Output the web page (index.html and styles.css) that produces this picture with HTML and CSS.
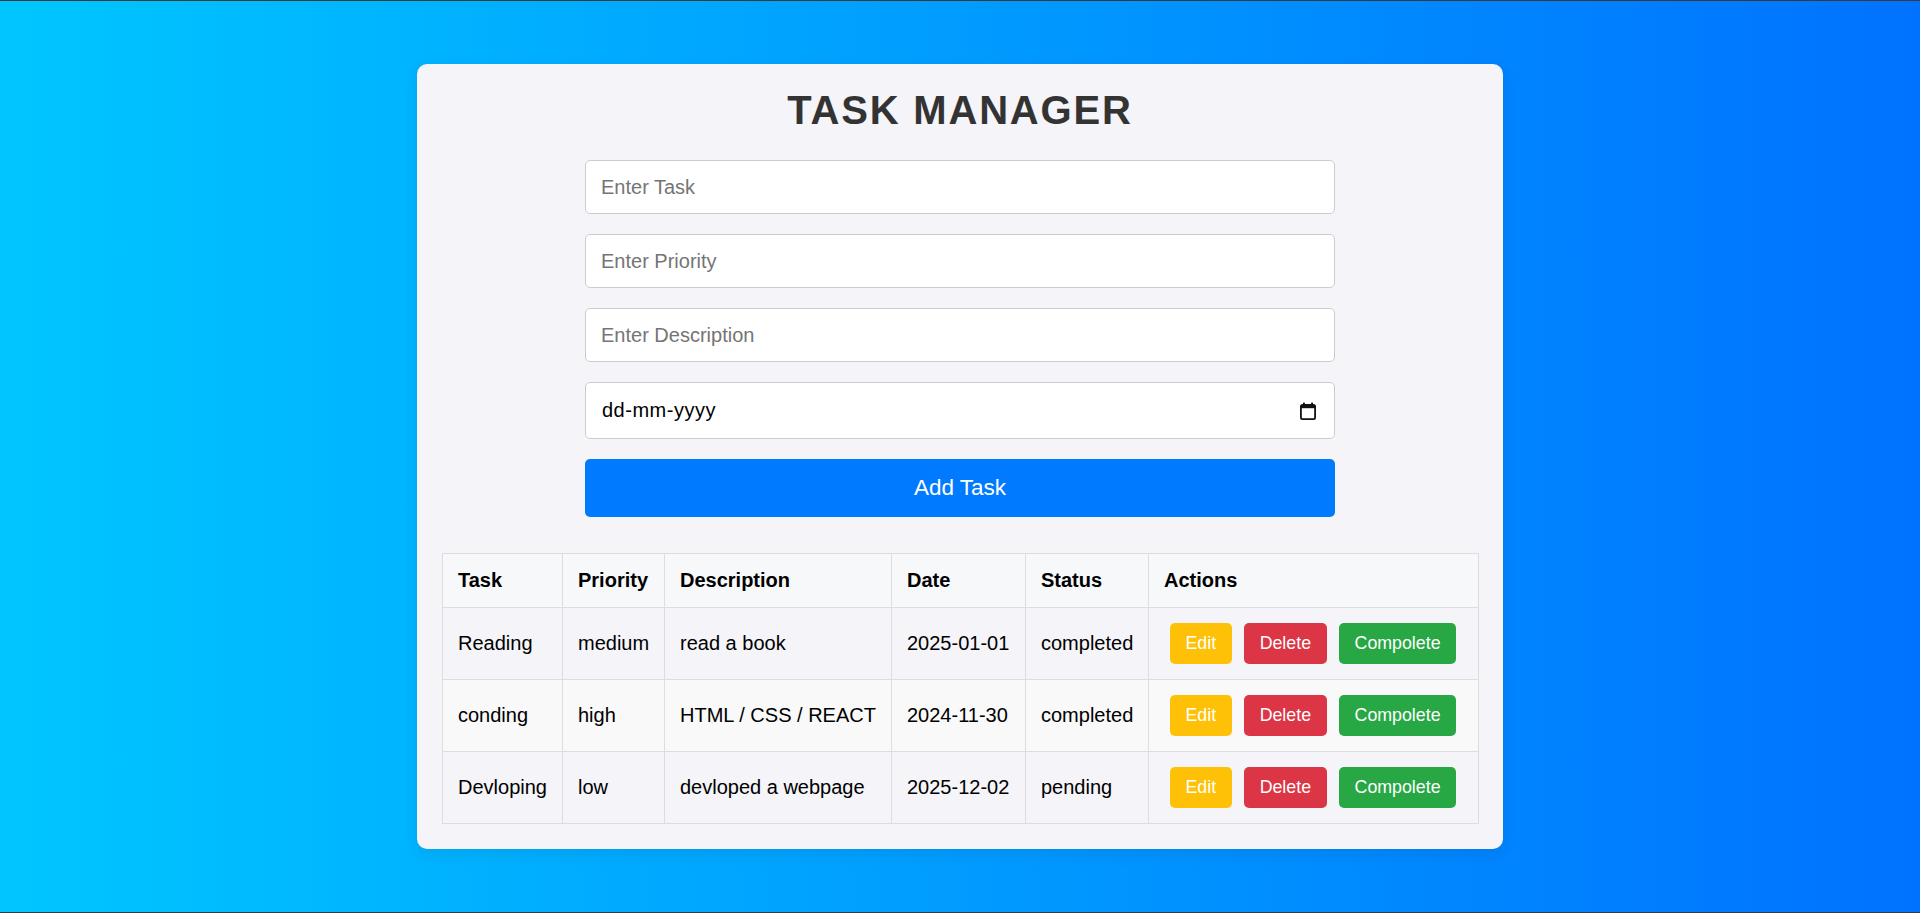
FILE: index.html
```html
<!DOCTYPE html>
<html lang="en">
<head>
<meta charset="utf-8">
<title>Task Manager</title>
<link rel="stylesheet" href="styles.css">
</head>
<body>
  <div class="app">
    <h1 class="title">TASK MANAGER</h1>
    <form class="task-form">
      <input class="field" type="text" placeholder="Enter Task">
      <input class="field" type="text" placeholder="Enter Priority">
      <input class="field" type="text" placeholder="Enter Description">
      <div class="field date-field">
        <span class="date-text">dd-mm-yyyy</span>
        <svg class="cal-icon" width="16" height="18" viewBox="0 0 16 18" aria-hidden="true">
          <rect x="0.9" y="3" width="14.2" height="14.1" rx="1.6" fill="none" stroke="#111" stroke-width="1.8"/>
          <rect x="0.9" y="3" width="14.2" height="3.2" fill="#111"/>
          <rect x="3" y="0.6" width="1.9" height="3" fill="#111"/>
          <rect x="11.1" y="0.6" width="1.9" height="3" fill="#111"/>
        </svg>
      </div>
      <button type="button" class="add-btn">Add Task</button>
    </form>

    <table class="task-table">
      <colgroup>
        <col class="c-task"><col class="c-priority"><col class="c-desc"><col class="c-date"><col class="c-status"><col class="c-actions">
      </colgroup>
      <thead>
        <tr><th>Task</th><th>Priority</th><th>Description</th><th>Date</th><th>Status</th><th>Actions</th></tr>
      </thead>
      <tbody>
        <tr>
          <td>Reading</td><td>medium</td><td>read a book</td><td>2025-01-01</td><td>completed</td>
          <td><div class="actions"><button class="btn btn-edit">Edit</button><button class="btn btn-delete">Delete</button><button class="btn btn-complete">Compolete</button></div></td>
        </tr>
        <tr>
          <td>conding</td><td>high</td><td>HTML / CSS / REACT</td><td>2024-11-30</td><td>completed</td>
          <td><div class="actions"><button class="btn btn-edit">Edit</button><button class="btn btn-delete">Delete</button><button class="btn btn-complete">Compolete</button></div></td>
        </tr>
        <tr>
          <td>Devloping</td><td>low</td><td>devloped a webpage</td><td>2025-12-02</td><td>pending</td>
          <td><div class="actions"><button class="btn btn-edit">Edit</button><button class="btn btn-delete">Delete</button><button class="btn btn-complete">Compolete</button></div></td>
        </tr>
      </tbody>
    </table>
  </div>
</body>
</html>
```
FILE: styles.css
```css
* {
  box-sizing: border-box;
}

html, body {
  margin: 0;
  padding: 0;
}

body {
  min-height: 100vh;
  display: flex;
  align-items: center;
  justify-content: center;
  font-family: "Liberation Sans", Arial, sans-serif;
  background: linear-gradient(to right, #00c6ff, #0072ff);
  box-shadow: inset 0 1px 0 #3a3a3a, inset 0 -1px 0 #3a3a3a;
}

.app {
  width: 1086px;
  background: #f4f4f9;
  border-radius: 10px;
  padding: 23px 25px 25px;
  box-shadow: 0 5px 15px rgba(0, 0, 0, 0.08);
}

.title {
  margin: 0 0 27px;
  text-align: center;
  font-size: 40px;
  line-height: 46px;
  font-weight: bold;
  letter-spacing: 1.8px;
  color: #333;
}

.task-form {
  width: 750px;
  margin: 0 auto;
  display: flex;
  flex-direction: column;
  gap: 20px;
}

.field {
  width: 100%;
  height: 54px;
  padding: 0 15px;
  border: 1px solid #ccc;
  border-radius: 5px;
  background: #fff;
  font-family: "Liberation Sans", Arial, sans-serif;
  font-size: 20px;
  color: #000;
  outline: none;
}

.field::placeholder {
  color: #757575;
}

.date-field {
  height: 57px;
  display: flex;
  align-items: center;
  justify-content: space-between;
  padding: 0 18px 0 16px;
}

.date-text {
  letter-spacing: 0.5px;
}

.cal-icon {
  display: block;
}

.add-btn {
  height: 58px;
  border: none;
  border-radius: 5px;
  background: #007bff;
  color: #fff;
  font-family: "Liberation Sans", Arial, sans-serif;
  font-size: 22.5px;
  cursor: pointer;
}

.task-table {
  width: 100%;
  margin-top: 36px;
  border-collapse: collapse;
  table-layout: fixed;
  font-size: 20px;
  color: #000;
}

.c-task { width: 120px; }
.c-priority { width: 102px; }
.c-desc { width: 227px; }
.c-date { width: 134px; }
.c-status { width: 123px; }
.c-actions { width: 330px; }

.task-table th,
.task-table td {
  border: 1px solid #ddd;
  padding: 15px;
  text-align: left;
  vertical-align: middle;
  line-height: 23px;
  white-space: nowrap;
}

.task-table th {
  background: #f7f8fa;
  font-weight: bold;
}

.task-table tbody tr:nth-child(even) td {
  background: #f9f9f9;
}

.actions {
  display: flex;
  gap: 12.5px;
  padding-left: 6px;
}

.btn {
  height: 41px;
  padding: 0 15.5px;
  border: none;
  border-radius: 5px;
  color: #fff;
  font-family: "Liberation Sans", Arial, sans-serif;
  font-size: 17.8px;
  line-height: 41px;
  cursor: pointer;
}

.btn-edit { background: #ffc107; }
.btn-delete { background: #dc3545; }
.btn-complete { background: #28a745; }
```
